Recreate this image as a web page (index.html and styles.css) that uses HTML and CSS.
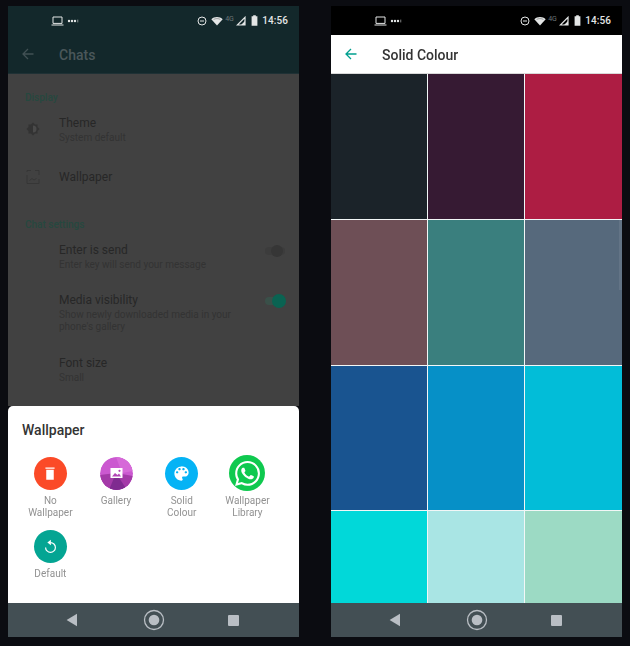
FILE: index.html
```html
<!DOCTYPE html>
<html lang="en">
<head>
<meta charset="utf-8">
<title>WhatsApp wallpaper settings</title>
<link rel="stylesheet" href="styles.css">
</head>
<body>
<svg class="defs" width="0" height="0" aria-hidden="true">
  <symbol id="status-left" viewBox="0 0 30 10">
    <path d="M2 1h9v6.400H2zM.5 9h12" fill="none" stroke="currentColor" stroke-width="1"/>
    <circle cx="18" cy="5" r="1.200" fill="currentColor"/><circle cx="21" cy="5" r="1.200" fill="currentColor"/><circle cx="24" cy="5" r="1.200" fill="currentColor"/>
    <rect x="26.400" y="3.600" width=".8" height="2.800" fill="currentColor" opacity=".7"/>
  </symbol>
  <symbol id="status-dnd" viewBox="0 0 10 10">
    <circle cx="5" cy="5" r="4" fill="none" stroke="currentColor"/><path d="M3 5h4" stroke="currentColor"/>
  </symbol>
  <symbol id="status-wifi" viewBox="0 0 12 10">
    <path d="M6 9.500.3 3.200C1.800 1.700 3.800 1 6 1s4.200.7 5.700 2.200z" fill="currentColor"/>
    <path d="M2.600 3.400C3.600 2.900 4.800 2.600 6 2.600s2.400.3 3.400.8" fill="none" stroke="#000" stroke-opacity=".45" stroke-width=".7"/>
  </symbol>
  <symbol id="status-signal" viewBox="0 0 10 10">
    <path d="M9 1.300V9H1.300z" fill="none" stroke="currentColor" stroke-width="1.200"/><path d="M9 5v4H5z" fill="currentColor"/>
  </symbol>
  <symbol id="status-battery" viewBox="0 0 7 11">
    <path d="M2.200.2h2.600v1H6.400v9.600H.6V1.200h1.600z" fill="currentColor"/>
  </symbol>
  <symbol id="nav-back" viewBox="0 0 12 14"><path d="M11 .8v12.400L.6 7z" fill="currentColor"/></symbol>
  <symbol id="nav-home" viewBox="0 0 22 22">
    <circle cx="11" cy="11" r="9.500" fill="none" stroke="currentColor" stroke-width="1.300"/><circle cx="11" cy="11" r="5.300" fill="currentColor"/>
  </symbol>
</svg>

<main class="screens">
  <section class="phone">
    <div class="status status-dim">
      <svg class="st-left"><use href="#status-left"/></svg>
      <span class="st-spacer"></span>
      <svg class="st-dnd"><use href="#status-dnd"/></svg>
      <svg class="st-wifi"><use href="#status-wifi"/></svg>
      <span class="st-4g">4G</span>
      <svg class="st-signal"><use href="#status-signal"/></svg>
      <svg class="st-battery"><use href="#status-battery"/></svg>
      <span class="st-time">14:56</span>
    </div>
    <header class="toolbar toolbar-dim">
      <svg class="arrow" viewBox="0 0 12 12"><path d="M11.500 6H1.300M6 1 1 6l5 5" fill="none" stroke="currentColor" stroke-width="1.300"/></svg>
      <h1 class="toolbar-title">Chats</h1>
    </header>
    <div class="settings">
      <h2 class="group group-display">Display</h2>
      <div class="row row-theme">
        <span class="row-icon">
          <svg viewBox="0 0 16 16" width="16" height="16"><path d="M8 1.500 10 3.500h2.500V6L14.500 8l-2 2v2.500H10L8 14.500 6 12.500H3.500V10L1.500 8l2-2V3.500H6z" fill="#333"/><path d="M8 4.500a3.500 3.500 0 0 1 0 7z" fill="#4a4a4a"/></svg>
        </span>
        <div class="row-text">
          <div class="row-title">Theme</div>
          <div class="row-sub">System default</div>
        </div>
      </div>
      <div class="row row-wallpaper">
        <span class="row-icon">
          <svg viewBox="0 0 16 16" width="16" height="16"><path d="M2 1.500h4M10 1.500h4V6M14 10v4.500H2V6M2 1.500V3" fill="none" stroke="#363636"/><path d="M4.500 11.500l2.500-2 2 1.500 2.500-1.500" fill="none" stroke="#363636"/></svg>
        </span>
        <div class="row-text">
          <div class="row-title">Wallpaper</div>
        </div>
      </div>
      <h2 class="group group-chat">Chat settings</h2>
      <div class="row row-enter">
        <span class="row-icon"></span>
        <div class="row-text">
          <div class="row-title">Enter is send</div>
          <div class="row-sub">Enter key will send your message</div>
        </div>
        <span class="toggle toggle-off"></span>
      </div>
      <div class="row row-media">
        <span class="row-icon"></span>
        <div class="row-text">
          <div class="row-title">Media visibility</div>
          <div class="row-sub">Show newly downloaded media in your phone's gallery</div>
        </div>
        <span class="toggle toggle-on"></span>
      </div>
      <div class="row row-font">
        <span class="row-icon"></span>
        <div class="row-text">
          <div class="row-title">Font size</div>
          <div class="row-sub">Small</div>
        </div>
      </div>
    </div>
    <div class="sheet">
      <h2 class="sheet-title">Wallpaper</h2>
      <div class="options">
        <div class="option">
          <span class="disc disc-red">
            <svg viewBox="0 0 24 24" width="20" height="20"><path d="M6.500 5.500h11V7h-11zM7.500 8h9v12h-9z" fill="#fff"/></svg>
          </span>
          <span class="option-label">No Wallpaper</span>
        </div>
        <div class="option">
          <svg class="disc" viewBox="0 0 33 33" width="33" height="33">
            <defs><clipPath id="gal"><circle cx="16.500" cy="16.500" r="16.500"/></clipPath></defs>
            <g clip-path="url(#gal)">
              <rect width="33" height="33" fill="#cb58d0"/>
              <path d="M0 18 16 16 33 19V33H0z" fill="#a43aa8"/>
              <path d="M9 33 16 16 27 33z" fill="#7f2b90"/>
              <path d="M16 0 33 0V14L22 16z" fill="#d66ad8"/>
            </g>
            <path d="M10.500 11h12v10h-12z" fill="#fff"/>
            <path d="M12 19.500l3-3.500 2.500 2 1.500-1.500 2 3z" fill="#b344b6"/>
            <circle cx="19.500" cy="13.800" r="1.100" fill="#b344b6"/>
          </svg>
          <span class="option-label">Gallery</span>
        </div>
        <div class="option">
          <span class="disc disc-blue">
            <svg viewBox="0 0 24 24" width="19" height="19"><path fill="#fff" d="M12 3c-4.970 0-9 4.030-9 9s4.030 9 9 9c.830 0 1.500-.670 1.500-1.500 0-.390-.150-.740-.390-1.040-.240-.300-.390-.650-.390-1.040 0-.830.670-1.500 1.500-1.500H16c2.760 0 5-2.240 5-5 0-4.420-4.030-8-9-8zm-5.500 9c-.830 0-1.500-.670-1.500-1.500S5.670 9 6.500 9 8 9.670 8 10.500 7.330 12 6.500 12zm3-4C8.670 8 8 7.330 8 6.500S8.670 5 9.500 5s1.500.670 1.500 1.500S10.330 8 9.500 8zm5 0c-.830 0-1.500-.670-1.500-1.500S13.670 5 14.500 5s1.500.670 1.500 1.500S15.330 8 14.500 8zm3 4c-.830 0-1.500-.670-1.500-1.500S16.670 9 17.500 9s1.500.670 1.500 1.500-.670 1.500-1.500 1.500z"/></svg>
          </span>
          <span class="option-label">Solid Colour</span>
        </div>
        <div class="option">
          <span class="disc disc-green">
            <svg viewBox="0 0 24 24" width="25" height="25"><path fill="#fff" d="M17.472 14.382c-.297-.149-1.758-.867-2.030-.967-.273-.099-.471-.148-.670.150-.197.297-.767.966-.940 1.164-.173.199-.347.223-.644.075-.297-.150-1.255-.463-2.390-1.475-.883-.788-1.480-1.761-1.653-2.059-.173-.297-.018-.458.130-.606.134-.133.298-.347.446-.520.149-.174.198-.298.298-.497.099-.198.050-.371-.025-.520-.075-.149-.669-1.612-.916-2.207-.242-.579-.487-.500-.669-.510-.173-.008-.371-.010-.570-.010-.198 0-.520.074-.792.372-.272.297-1.040 1.016-1.040 2.479 0 1.462 1.065 2.875 1.213 3.074.149.198 2.096 3.200 5.077 4.487.709.306 1.262.489 1.694.625.712.227 1.360.195 1.871.118.571-.085 1.758-.719 2.006-1.413.248-.694.248-1.289.173-1.413-.074-.124-.272-.198-.570-.347m-5.421 7.403h-.004a9.870 9.870 0 01-5.031-1.378l-.361-.214-3.741.982.998-3.648-.235-.374a9.860 9.860 0 01-1.510-5.260c.001-5.450 4.436-9.884 9.888-9.884 2.640 0 5.122 1.030 6.988 2.898a9.825 9.825 0 012.893 6.994c-.003 5.450-4.437 9.884-9.885 9.884m8.413-18.297A11.815 11.815 0 0012.050 0C5.495 0 .160 5.335.157 11.892c0 2.096.547 4.142 1.588 5.945L.057 24l6.305-1.654a11.882 11.882 0 005.683 1.448h.005c6.554 0 11.890-5.335 11.893-11.893a11.821 11.821 0 00-3.480-8.413Z"/></svg>
          </span>
          <span class="option-label">Wallpaper Library</span>
        </div>
        <div class="option">
          <span class="disc disc-teal">
            <svg viewBox="0 0 24 24" width="19" height="19"><path d="M12.500 3.500 8 7l4.500 3.500z" fill="#fff"/><path d="M12 7a6.200 6.200 0 1 1-6.200 6.200" fill="none" stroke="#fff" stroke-width="1.500"/></svg>
          </span>
          <span class="option-label">Default</span>
        </div>
      </div>
    </div>
    <nav class="navbar">
      <svg class="nav-back"><use href="#nav-back"/></svg>
      <svg class="nav-home"><use href="#nav-home"/></svg>
      <span class="nav-square"></span>
    </nav>
  </section>

  <section class="phone">
    <div class="status status-black">
      <svg class="st-left"><use href="#status-left"/></svg>
      <span class="st-spacer"></span>
      <svg class="st-dnd"><use href="#status-dnd"/></svg>
      <svg class="st-wifi"><use href="#status-wifi"/></svg>
      <span class="st-4g">4G</span>
      <svg class="st-signal"><use href="#status-signal"/></svg>
      <svg class="st-battery"><use href="#status-battery"/></svg>
      <span class="st-time">14:56</span>
    </div>
    <header class="toolbar toolbar-light">
      <svg class="arrow" viewBox="0 0 12 12"><path d="M11.500 6H1.300M6 1 1 6l5 5" fill="none" stroke="currentColor" stroke-width="1.300"/></svg>
      <h1 class="toolbar-title">Solid Colour</h1>
    </header>
    <div class="swatches">
      <div class="swatch sw-1"></div><div class="swatch sw-2"></div><div class="swatch sw-3"></div>
      <div class="swatch sw-4"></div><div class="swatch sw-5"></div><div class="swatch sw-6"></div>
      <div class="swatch sw-7"></div><div class="swatch sw-8"></div><div class="swatch sw-9"></div>
      <div class="swatch sw-10"></div><div class="swatch sw-11"></div><div class="swatch sw-12"></div>
      <span class="scroll-thumb"></span>
    </div>
    <nav class="navbar">
      <svg class="nav-back"><use href="#nav-back"/></svg>
      <svg class="nav-home"><use href="#nav-home"/></svg>
      <span class="nav-square"></span>
    </nav>
  </section>
</main>
</body>
</html>
```

FILE: styles.css
```css
* { box-sizing: border-box; }
html, body { margin: 0; height: 100%; }
body {
  background: #0b0c11;
  font-family: Roboto, "Noto Sans", sans-serif;
  overflow: hidden;
}
.defs { position: absolute; }
h1, h2 { margin: 0; font-weight: 500; }

.screens {
  display: flex;
  gap: 32px;
  padding: 6px 8px 9px;
  height: 646px;
}
.phone {
  width: 291px;
  height: 631px;
  display: flex;
  flex-direction: column;
  overflow: hidden;
  filter: blur(0.35px);
}

/* status bar */
.status {
  height: 28px;
  flex: none;
  display: flex;
  align-items: center;
  padding: 0 11px 0 43px;
  color: #e4e6e6;
}
.status-dim { background: #13282b; }
.status-black { background: #000; height: 29px; }
.st-left { width: 30px; height: 10px; margin-top: 1px; }
.st-spacer { flex: 1; }
.st-dnd { width: 10px; height: 10px; margin-right: 4px; margin-top: 1px; }
.st-wifi { width: 12px; height: 10px; margin-right: 2px; margin-top: 1px; }
.st-4g { font-size: 7px; color: #6d7678; width: 10px; margin-top: -3px; margin-right: 1px; }
.st-signal { width: 10px; height: 10px; margin-right: 5px; margin-top: 1px; }
.st-battery { width: 7px; height: 11px; margin-right: 4px; }
.st-time { font-size: 10px; font-weight: 500; letter-spacing: .1px; }

/* toolbar */
.toolbar {
  flex: none;
  display: flex;
  align-items: center;
  padding: 0 0 0 14px;
}
.toolbar-dim {
  height: 40px;
  background: #13282b;
  color: #415054;
  border-bottom: 1px solid #1f3135;
}
.toolbar-light {
  height: 39px;
  background: #fff;
  color: #00a08f;
  border-bottom: 1px solid #d9d9d9;
}
.arrow { width: 12px; height: 12px; flex: none; }
.toolbar-title { font-size: 14px; margin-left: 25px; padding-top: 2px; }
.toolbar-dim .toolbar-title { color: #4a575a; }
.toolbar-light .toolbar-title { color: #333; }

/* dimmed settings list */
.settings {
  flex: 1;
  background: #414141;
  padding-left: 17px;
  padding-right: 14px;
  overflow: hidden;
}
.group { font-size: 10px; color: #26483f; line-height: 12px; }
.group-display { margin-top: 18px; }
.group-chat { margin-top: 34px; }
.row { display: flex; align-items: flex-start; }
.row-icon {
  width: 34px;
  flex: none;
  display: flex;
  align-items: center;
  padding-top: 5px;
}
.row-wallpaper .row-icon { padding-top: 0; margin-top: -1px; }
.row-text { flex: 1; min-width: 0; }
.row-title { font-size: 12px; line-height: 14px; color: #272727; }
.row-sub { font-size: 10px; line-height: 12px; color: #333; margin-top: 2px; width: 190px; }
.row-enter .row-sub { width: 210px; }
.row-theme { margin-top: 12px; }
.row-wallpaper { margin-top: 26px; }
.row-enter { margin-top: 12px; }
.row-media { margin-top: 22px; }
.row-font { margin-top: 23px; }

.toggle { width: 20px; height: 8px; border-radius: 4px; margin-top: 4px; position: relative; flex: none; }
.toggle::after {
  content: "";
  position: absolute;
  top: -2px;
  width: 12px;
  height: 12px;
  border-radius: 50%;
}
.toggle-off { background: #3c3c3c; }
.toggle-off::after { left: 6px; background: #363636; }
.toggle-on { background: #3a5049; }
.toggle-on::after { right: -1px; top: -3px; width: 14px; height: 14px; background: #0a6352; }

/* bottom sheet */
.sheet {
  flex: none;
  height: 197px;
  background: #fff;
  border-radius: 5px 5px 0 0;
  padding: 15px 0 0 9.5px;
}
.sheet-title { font-size: 14px; line-height: 18px; color: #333; margin-left: 4.5px; }
.options {
  display: grid;
  grid-template-columns: repeat(4, 65.7px);
  row-gap: 9px;
  margin-top: 16px;
}
.option { display: flex; flex-direction: column; align-items: center; }
.disc {
  width: 33px;
  height: 33px;
  margin: 1.500px 0;
  border-radius: 50%;
  display: flex;
  align-items: center;
  justify-content: center;
  flex: none;
}
.disc-red { background: #fb4a27; }
.disc-blue { background: #05b3f5; }
.disc-green { background: #0fc94f; width: 36px; height: 36px; margin: 0; }
.disc-teal { background: #04a593; }
.option-label {
  font-size: 10px;
  line-height: 12px;
  color: #929292;
  text-align: center;
  margin-top: 4px;
  width: 50px;
}

/* solid colour grid */
.swatches {
  flex: 1;
  display: grid;
  grid-template-columns: 96px 96px 97px;
  grid-template-rows: 145px 145px 144px 1fr;
  gap: 1px;
  background: #f2f7f7;
  overflow: hidden;
  position: relative;
}
.scroll-thumb {
  position: absolute;
  right: 0;
  top: 146px;
  width: 3px;
  height: 70px;
  background: rgba(255, 255, 255, .08);
}
.sw-1 { background: #1b2329; }
.sw-2 { background: #361a33; }
.sw-3 { background: #ad1d43; }
.sw-4 { background: #6e4f56; }
.sw-5 { background: #3a7f7e; }
.sw-6 { background: #56697c; }
.sw-7 { background: #195490; }
.sw-8 { background: #0690c7; }
.sw-9 { background: #02bdd8; }
.sw-10 { background: #01d8d9; }
.sw-11 { background: #a9e5e4; }
.sw-12 { background: #9cdac4; }

/* navigation bar */
.navbar {
  flex: none;
  height: 34px;
  background: #434f54;
  color: #b9bec4;
  display: flex;
  align-items: center;
  padding-left: 58px;
}
.nav-back { width: 12px; height: 14px; }
.nav-home { width: 22px; height: 22px; margin-left: 65px; }
.nav-square { width: 11px; height: 11px; background: #b9bec4; border-radius: 1px; margin-left: 63px; }
```
